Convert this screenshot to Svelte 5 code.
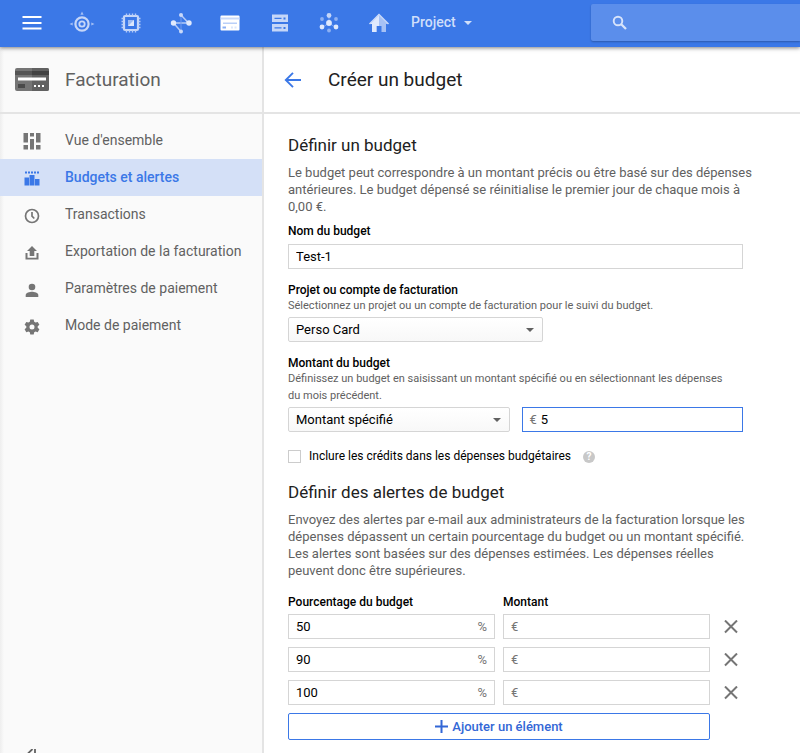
<script>
  let budgetName = $state('Test-1');
  let amount = $state('5');
  let includeCredits = $state(false);
  let nextId = 4;
  let alerts = $state([
    { id: 1, percent: '50', amount: '' },
    { id: 2, percent: '90', amount: '' },
    { id: 3, percent: '100', amount: '' }
  ]);

  const addAlert = () => alerts.push({ id: nextId++, percent: '', amount: '' });
  const removeAlert = (id) => (alerts = alerts.filter((a) => a.id !== id));

  const links = [
    { label: "Vue d'ensemble", icon: 'overview' },
    { label: 'Budgets et alertes', icon: 'budget', active: true },
    { label: 'Transactions', icon: 'clock' },
    { label: 'Exportation de la facturation', icon: 'export' },
    { label: 'Paramètres de paiement', icon: 'person' },
    { label: 'Mode de paiement', icon: 'gear' }
  ];
</script>

{#snippet caret()}
  <svg class="caret" width="8" height="4" viewBox="0 0 8 4" aria-hidden="true"><path d="M0 0h8L4 4z" fill="currentColor" /></svg>
{/snippet}

<div class="app">
  <header class="topbar">
    <div class="tools">
      <div class="shortcuts">
        <button aria-label="Menu">
          <svg width="28" height="28" viewBox="0 0 28 28"><path d="M4.500 7h19v2h-19zM4.500 13h19v2h-19zM4.500 18.500h19v2h-19z" fill="#fff" /></svg>
        </button>
        <button aria-label="App Engine">
          <svg width="28" height="28" viewBox="0 0 28 28">
            <circle cx="14" cy="15" r="6.600" fill="none" stroke="#c5d6f8" stroke-width="2.200" />
            <circle cx="14" cy="15" r="2.700" fill="none" stroke="#c5d6f8" stroke-width="1.800" />
            <path d="M14 2.500l1.600 3.200h-3.200zM1.500 15l3.200-1.600v3.200zM26.500 15l-3.200-1.600v3.200z" fill="#a5bff4" />
          </svg>
        </button>
        <button aria-label="Compute Engine">
          <svg width="28" height="28" viewBox="0 0 28 28">
            <rect x="7" y="7" width="14" height="14" rx="1" fill="none" stroke="#c5d6f8" stroke-width="2.200" />
            <path d="M9.500 4.500v2M12.500 4.500v2M15.500 4.500v2M18.500 4.500v2M9.500 21.500v2M12.500 21.500v2M15.500 21.500v2M18.500 21.500v2M4.500 9.500h2M4.500 12.500h2M4.500 15.500h2M4.500 18.500h2M21.500 9.500h2M21.500 12.500h2M21.500 15.500h2M21.500 18.500h2" stroke="#b4caf7" stroke-width="1.400" />
            <path d="M11 11h6v6h-6z" fill="#9dbbf4" /><path d="M17 11v6h-6z" fill="#dce7fc" />
          </svg>
        </button>
        <button aria-label="Réseau">
          <svg width="28" height="28" viewBox="0 0 28 28">
            <path d="M14 6l7.500 8M6.500 14h15M6.500 14l7.500 8.500" fill="none" stroke="#b4caf7" stroke-width="1.500" />
            <path d="M14 6v16" stroke="#6e99ef" />
            <circle cx="14" cy="6" r="2" fill="#c9d9f9" /><circle cx="6.500" cy="14" r="2.700" fill="#dfe9fd" />
            <circle cx="22" cy="14" r="2.700" fill="#dfe9fd" /><circle cx="14" cy="22.500" r="2" fill="#c9d9f9" />
          </svg>
        </button>
        <button aria-label="Facturation">
          <svg width="28" height="28" viewBox="0 0 28 28">
            <rect x="4.500" y="6.500" width="19" height="15" rx="1" fill="#fff" />
            <path d="M4.500 8.500h19v2h-19z" fill="#c9d9f9" /><path d="M7 13.500h14v1.500H7z" fill="#b9cff8" />
            <path d="M6.500 17.500h3.500v2H6.500z" fill="#8db0f3" /><path d="M15 17.500h2v2h-2zM18.500 17.500h2v2h-2z" fill="#dce7fc" />
          </svg>
        </button>
        <button aria-label="Stockage">
          <svg width="28" height="28" viewBox="0 0 28 28">
            <rect x="6" y="5.500" width="16" height="7.500" fill="#c5d6f8" /><rect x="6" y="15" width="16" height="7.500" fill="#c5d6f8" />
            <path d="M8.500 9.300h7M8.500 18.800h7" stroke="#3b78e7" stroke-width="1.300" />
            <path d="M17.500 8.500h2v2h-2zM17.500 18h2v2h-2z" fill="#3b78e7" />
          </svg>
        </button>
        <button aria-label="API">
          <svg width="28" height="28" viewBox="0 0 28 28">
            <path d="M14 6v8M14 14l-6 4M14 14l6 4" stroke="#80a6f1" />
            <circle cx="14" cy="6.500" r="2.400" fill="#c5d6f8" /><circle cx="14" cy="14" r="2.900" fill="#dfe9fd" />
            <circle cx="7" cy="18" r="2.400" fill="#dfe9fd" /><circle cx="21" cy="18" r="2.400" fill="#dfe9fd" />
            <circle cx="7" cy="10" r="1.900" fill="#8db0f3" /><circle cx="21" cy="10" r="1.900" fill="#8db0f3" /><circle cx="14" cy="21.500" r="1.900" fill="#8db0f3" />
          </svg>
        </button>
        <button aria-label="Accueil">
          <svg width="28" height="28" viewBox="0 0 28 28">
            <path d="M14 5L4.500 15h2.500v8h4.500v-6h5v6h4.500v-8h2.500z" fill="#a6c1f5" />
            <path d="M14 5L4.500 15h2.500v8h4.500v-6h2.500z" fill="#dfe9fd" />
            <path d="M4.500 15L14 5.500l9.500 9.500" fill="none" stroke="#c5d6f8" stroke-width="1.500" />
          </svg>
        </button>
      </div>
      <button class="project">Project {@render caret()}</button>
    </div>
    <label class="search">
      <svg width="16" height="16" viewBox="0 0 16 16" aria-hidden="true">
        <circle cx="6" cy="6" r="4.300" fill="none" stroke="#d8e4fb" stroke-width="1.900" />
        <path d="M9 9l5 5" stroke="#d8e4fb" stroke-width="2.300" />
      </svg>
      <input type="search" aria-label="Rechercher" />
    </label>
  </header>

  <div class="body">
    <aside>
      <div class="head product">
        <svg width="34" height="23" viewBox="0 0 34 23" aria-hidden="true">
          <rect x="0" y="0" width="34" height="23" rx="2" fill="#757575" />
          <path d="M17 0h15a2 2 0 0 1 2 2v19a2 2 0 0 1-2 2H17z" fill="#616161" />
          <path d="M0 3h17v4H0z" fill="#555" /><path d="M17 3h17v4H17z" fill="#424242" />
          <path d="M3 9.500h28v3H3z" fill="#fff" /><path d="M3 16h7v4H3z" fill="#4a4a4a" />
          <path d="M19 17h2v2h-2zM23 17h2v2h-2zM27 17h2v2h-2z" fill="#fff" />
        </svg>
        <span>Facturation</span>
      </div>
      <nav>
        {#each links as link}
          <a href="#{link.icon}" class:active={link.active} aria-current={link.active ? 'page' : undefined}>
            <svg width="20" height="20" viewBox="0 0 20 20" fill="currentColor" aria-hidden="true">
              {#if link.icon === 'overview'}
                <path d="M1.500 2H6v9.500H1.500zM1.500 14H6v4.500H1.500zM8 2h4v3.500H8zM8 8h4v10.500H8zM14 2h4.500v9.500H14zM14 14h4.500v4.500H14z" />
              {:else if link.icon === 'budget'}
                <path d="M3 3.500h2v2H3zM6 3.500h2v2H6zM9 3.500h2v2H9zM12 3.500h2v2h-2zM15 3.500h2v2h-2zM2.500 9.500H7V17.500H2.500zM7.500 7h5v10.500h-5zM13 11h4.500v6.500H13z" />
              {:else if link.icon === 'clock'}
                <circle cx="10" cy="11" r="6.500" fill="none" stroke="currentColor" stroke-width="1.700" />
                <path d="M10 7v4.200l2.300 2.300" fill="none" stroke="currentColor" stroke-width="1.700" />
              {:else if link.icon === 'export'}
                <path d="M10 4l5 5H12.300V14H7.700V9H5zM3.500 11h2v4.800h9V11h2v6.500h-13z" />
              {:else if link.icon === 'person'}
                <circle cx="10" cy="8" r="3.300" /><path d="M3.700 18v-2c0-2.200 4-3.200 6.300-3.200s6.300 1 6.300 3.200v2z" />
              {:else}
                <path fill-rule="evenodd" d="M8.300 3.600h3.400l.5 2.200 1.300.8 2.200-.7 1.700 2.900-1.700 1.500v1.500l1.700 1.500-1.700 2.900-2.200-.7-1.300.8-.5 2.100H8.300l-.5-2.100-1.300-.8-2.200.7-1.700-2.900 1.700-1.500v-1.500L2.600 8.800l1.700-2.900 2.200.7 1.300-.8zM10 8.500a2.500 2.500 0 1 0 0 5 2.500 2.500 0 0 0 0-5z" />
              {/if}
            </svg>
            {link.label}
          </a>
        {/each}
      </nav>
      <div class="collapse">
        <button aria-label="Réduire le menu">
          <svg width="12" height="14" viewBox="0 0 12 14"><path d="M6.500 0l-6 6 6 6M9 0v14" fill="none" stroke="#616161" stroke-width="1.800" /></svg>
        </button>
      </div>
    </aside>

    <main>
      <div class="head title">
        <a href="#budget" aria-label="Retour">
          <svg width="18" height="16" viewBox="0 0 18 16"><path d="M17 8H2M9 .800L1.800 8 9 15.200" fill="none" stroke="#3b78e7" stroke-width="1.900" /></svg>
        </a>
        <h1>Créer un budget</h1>
      </div>

      <form onsubmit={(e) => e.preventDefault()}>
        <h2>Définir un budget</h2>
        <p class="intro">Le budget peut correspondre à un montant précis ou être basé sur des dépenses antérieures. Le budget dépensé se réinitialise le premier jour de chaque mois à 0,00 €.</p>

        <div class="group">
          <label class="name" for="name">Nom du budget</label>
          <div class="box"><input id="name" bind:value={budgetName} /></div>
        </div>

        <div class="group">
          <label for="account">Projet ou compte de facturation</label>
          <p class="hint">Sélectionnez un projet ou un compte de facturation pour le suivi du budget.</p>
          <div class="select account">
            <select id="account"><option>Perso Card</option></select>
            {@render caret()}
          </div>
        </div>

        <div class="group">
          <label for="kind">Montant du budget</label>
          <p class="hint">Définissez un budget en saisissant un montant spécifié ou en sélectionnant les dépenses du mois précédent.</p>
          <div class="pair">
            <div class="select">
              <select id="kind"><option>Montant spécifié</option></select>
              {@render caret()}
            </div>
            <div class="box focused"><span>€</span><input aria-label="Montant en euros" bind:value={amount} /></div>
          </div>
        </div>

        <div class="credits">
          <input id="credits" type="checkbox" bind:checked={includeCredits} />
          <label for="credits">Inclure les crédits dans les dépenses budgétaires</label>
          <button type="button" class="help" aria-label="Aide">?</button>
        </div>

        <h2>Définir des alertes de budget</h2>
        <p class="intro">Envoyez des alertes par e-mail aux administrateurs de la facturation lorsque les dépenses dépassent un certain pourcentage du budget ou un montant spécifié. Les alertes sont basées sur des dépenses estimées. Les dépenses réelles peuvent donc être supérieures.</p>

        <div class="row titles"><span id="col-percent">Pourcentage du budget</span><span id="col-amount">Montant</span></div>
        <div class="alerts">
          {#each alerts as alert (alert.id)}
            <div class="row">
              <div class="box"><input aria-labelledby="col-percent" bind:value={alert.percent} /><span>%</span></div>
              <div class="box"><span>€</span><input aria-labelledby="col-amount" bind:value={alert.amount} /></div>
              <button type="button" class="remove" aria-label="Supprimer" onclick={() => removeAlert(alert.id)}>
                <svg width="14" height="14" viewBox="0 0 14 14"><path d="M1 .500l12 12M13 .500L1 12.500" stroke="#757575" stroke-width="2" /></svg>
              </button>
            </div>
          {/each}
          <div class="row">
            <button type="button" class="add" onclick={addAlert}>
              <svg width="13" height="13" viewBox="0 0 13 13" aria-hidden="true"><path d="M6.500 0v13M0 6.500h13" stroke="currentColor" stroke-width="2" /></svg>
              Ajouter un élément
            </button>
          </div>
        </div>
      </form>
    </main>
  </div>
</div>

<style>
  :global(body) {
    margin: 0;
    background: #fff;
  }

  .app {
    display: flex;
    flex-direction: column;
    height: 100vh;
    overflow: hidden;
    font: 12px/17px Roboto, 'Liberation Sans', sans-serif;
    color: #212121;
  }

  .app * {
    box-sizing: border-box;
  }

  button,
  input,
  select {
    margin: 0;
    padding: 0;
    border: 0;
    background: none;
    color: inherit;
    font: inherit;
    outline: none;
  }

  button {
    cursor: pointer;
  }

  svg {
    display: block;
    flex: none;
  }

  /* Top bar */
  .topbar {
    position: relative;
    z-index: 1;
    display: flex;
    flex: none;
    align-items: center;
    height: 47px;
    padding-bottom: 2px;
    background: #3b78e7;
    box-shadow: 0 1px 4px rgba(0, 0, 0, 0.5);
  }

  .tools {
    display: flex;
    flex: 0 0 591px;
    align-items: center;
    padding-left: 18px;
  }

  .shortcuts {
    display: flex;
    flex: 0 0 375px;
    justify-content: space-between;
  }

  .project {
    display: flex;
    gap: 8px;
    align-items: center;
    margin-left: 18px;
    color: #d0dffa;
    font-size: 14px;
    font-weight: 500;
  }

  .search {
    display: flex;
    flex: 1;
    gap: 16px;
    align-items: center;
    min-width: 0;
    height: 37px;
    padding-left: 21px;
    border-radius: 2px 0 0 2px;
    background: #5b8eeb;
    box-shadow: 0 1px 2px rgba(0, 0, 0, 0.25);
  }

  .search input {
    flex: 1;
    min-width: 0;
    color: #fff;
  }

  /* Side navigation */
  .body {
    display: flex;
    flex: 1;
    min-height: 0;
  }

  .head {
    display: flex;
    flex: none;
    align-items: center;
    height: 67px;
    border-bottom: 2px solid #e4e4e4;
    font-size: 19px;
    line-height: 24px;
  }

  aside {
    display: flex;
    flex: 0 0 264px;
    flex-direction: column;
    border-right: 2px solid #e4e4e4;
    background: linear-gradient(to right, #eee, #fafafa 4px);
    color: #616161;
  }

  .product {
    gap: 16px;
    padding-left: 15px;
  }

  nav {
    flex: 1;
    padding-top: 8px;
  }

  nav a {
    display: flex;
    gap: 23px;
    align-items: center;
    height: 37px;
    padding-left: 22px;
    color: #616161;
    font-size: 14px;
    text-decoration: none;
  }

  nav a svg {
    color: #757575;
  }

  nav a.active {
    background: #d4e0f7;
    color: #3b78e7;
    font-weight: 500;
  }

  nav a.active svg {
    color: #3b78e7;
  }

  .collapse {
    height: 8px;
    padding: 4px 0 0 26px;
    overflow: hidden;
  }

  /* Content */
  main {
    flex: 1;
    min-width: 0;
  }

  .title {
    gap: 26px;
    padding-left: 20px;
  }

  h1,
  h2,
  p {
    margin: 0;
    font-weight: 400;
  }

  h1 {
    font-size: 19px;
    line-height: 24px;
  }

  form {
    max-width: 479px;
    padding: 20px 0 12px 24px;
    margin-right: 24px;
  }

  h2 {
    margin-bottom: 8px;
    font-size: 17px;
    line-height: 22px;
  }

  .intro,
  .hint {
    color: #616161;
  }

  .intro {
    margin: 0 -16px 9px 0;
    font-size: 13px;
  }

  .hint {
    margin-bottom: 3px;
    padding-right: 8px;
    font-size: 11px;
  }

  .group {
    margin-bottom: 14px;
  }

  .group label,
  .titles {
    display: block;
    color: #000;
    font-weight: 500;
    line-height: 14px;
  }

  .group .name {
    margin-bottom: 6px;
  }

  .box {
    display: flex;
    gap: 4px;
    align-items: center;
    min-width: 0;
    height: 25px;
    padding: 0 7px;
    border: 1px solid #d5d5d5;
    background: #fff;
    color: #000;
    font-size: 13px;
  }

  .box span {
    color: #757575;
  }

  .box input {
    flex: 1;
    min-width: 0;
  }

  .focused {
    border-color: #3b78e7;
  }

  .select {
    position: relative;
    color: #000;
    font-size: 13px;
  }

  .select select {
    appearance: none;
    display: block;
    width: 100%;
    height: 25px;
    padding: 0 24px 0 7px;
    border: 1px solid #d5d5d5;
    border-radius: 2px;
    background: linear-gradient(#fff, #f8f8f8);
  }

  .select :global(.caret) {
    position: absolute;
    top: 11px;
    right: 9px;
    color: #616161;
    pointer-events: none;
  }

  .account {
    max-width: 255px;
  }

  .pair {
    display: grid;
    grid-template-columns: 1fr 1fr;
    gap: 12px;
  }

  .credits {
    display: flex;
    align-items: center;
    margin: 16px 0;
    color: #000;
  }

  .credits input {
    appearance: none;
    width: 13px;
    height: 13px;
    border: 1px solid #ccc;
    background: #fff;
  }

  .credits input:checked {
    background: #3b78e7;
  }

  .credits label {
    margin: 0 12px 0 8px;
  }

  .help {
    width: 12px;
    height: 12px;
    border-radius: 50%;
    background: #c8c8c8;
    color: #fff;
    font-size: 10px;
    font-weight: 700;
    line-height: 12px;
  }

  .row {
    display: grid;
    grid-template-columns: 1fr 1fr 25px;
    gap: 8px;
  }

  .titles {
    display: grid;
    margin: 16px 0 5px;
  }

  .alerts {
    display: grid;
    gap: 8px;
  }

  .remove {
    display: grid;
    place-items: center;
  }

  .add {
    display: flex;
    grid-column: span 2;
    gap: 4px;
    align-items: center;
    justify-content: center;
    height: 27px;
    border: 1px solid #3b78e7;
    border-radius: 2px;
    color: #3367d6;
    font-size: 13px;
    font-weight: 500;
  }
</style>
